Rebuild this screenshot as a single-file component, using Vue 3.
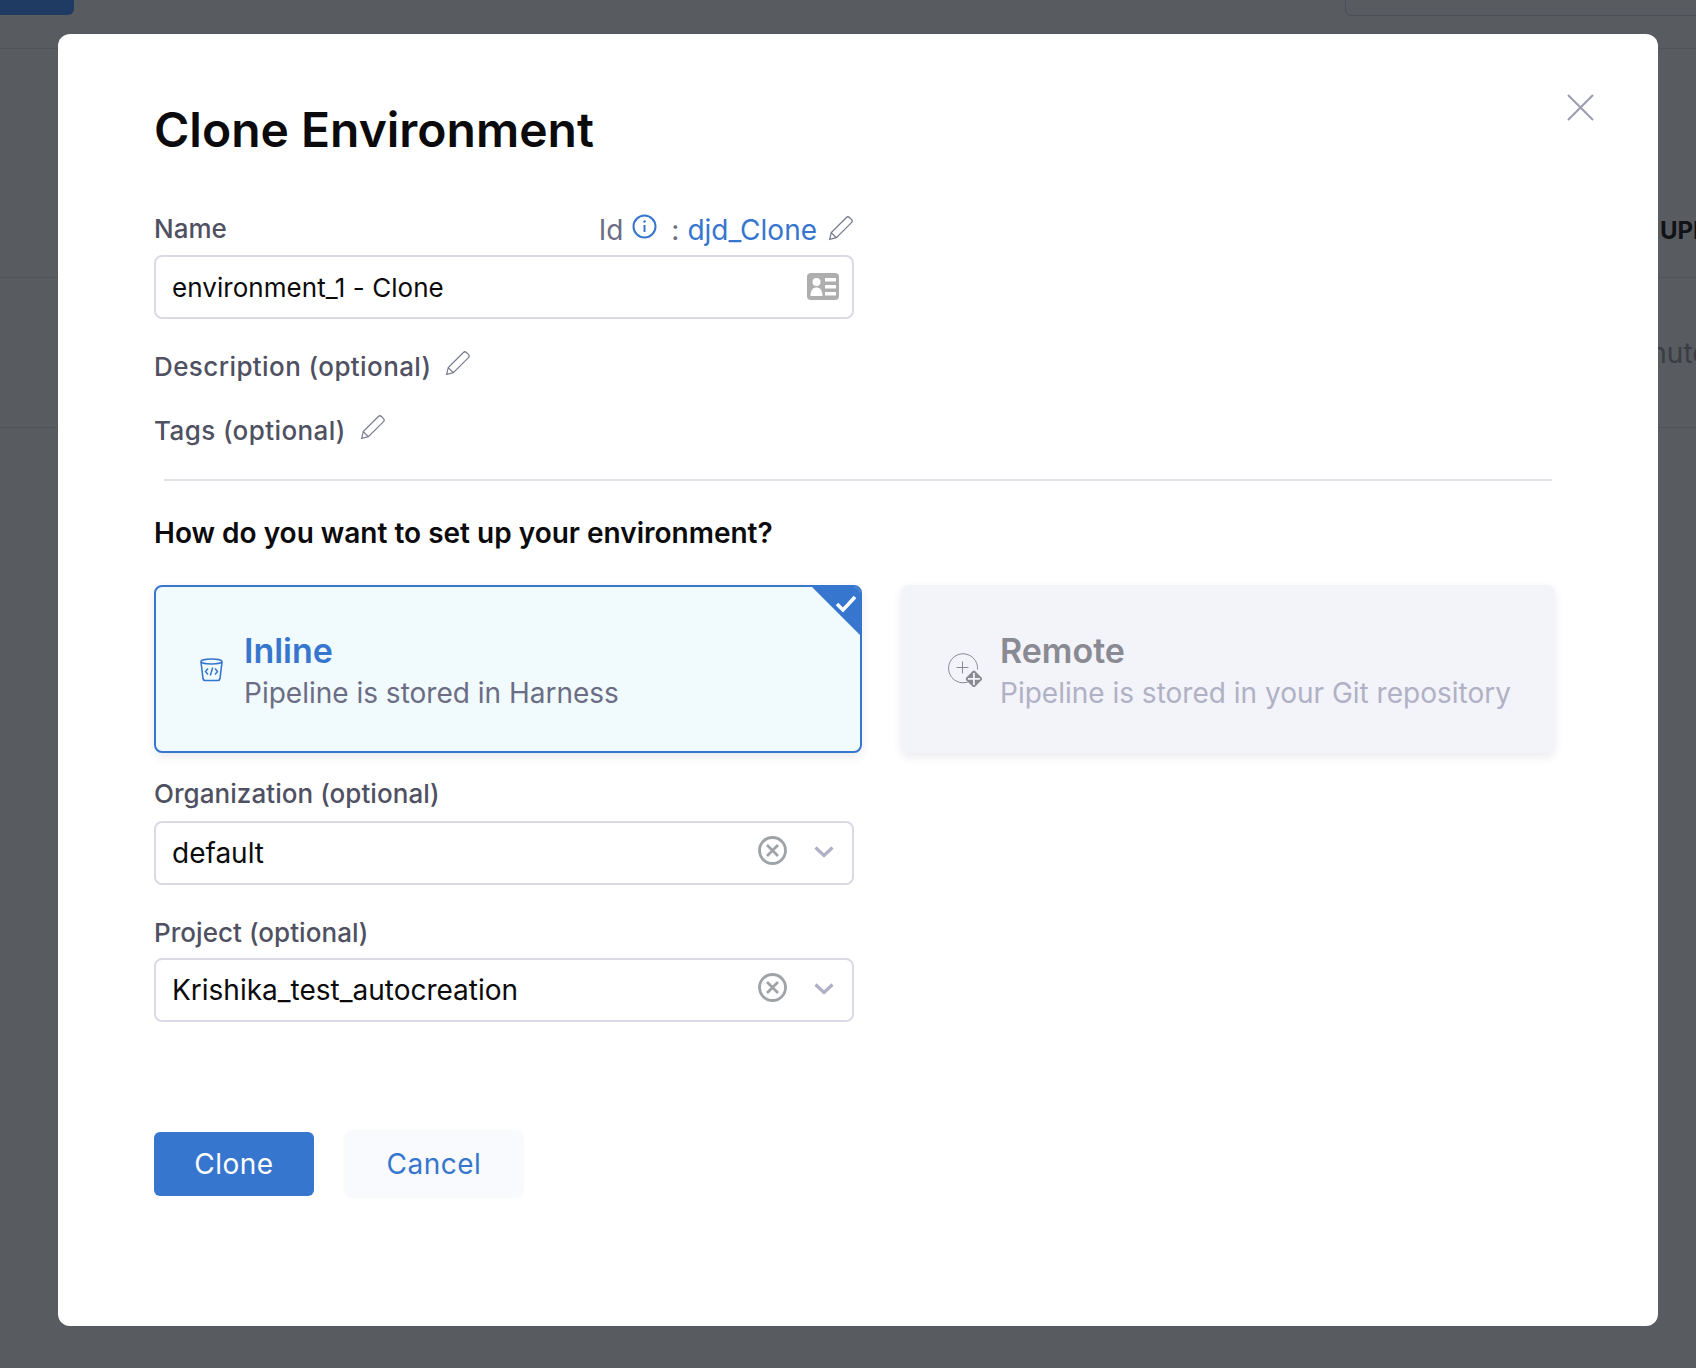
<script setup>
const cards = [
  { key: 'inline', title: 'Inline', text: 'Pipeline is stored in Harness', selected: true },
  { key: 'remote', title: 'Remote', text: 'Pipeline is stored in your Git repository', selected: false }
]
const selects = [
  { label: 'Organization (optional)', value: 'default' },
  { label: 'Project (optional)', value: 'Krishika_test_autocreation' }
]
const pencil = 'M1.500 22.500l1.500-6.200L17 2.300a2 2 0 0 1 2.800 0l1.900 1.900a2 2 0 0 1 0 2.800L7.700 21l-6.200 1.500zM3 16.300L7.700 21'
</script>

<template>
  <div class="page">
    <div class="behind">
      <div class="behind-btn"></div>
      <div class="behind-search"></div>
      <div class="behind-line line-a"></div>
      <div class="behind-line line-b"></div>
      <div class="behind-line line-c"></div>
      <span class="behind-head">UPDATED</span>
      <span class="behind-cell">minutes ago</span>
    </div>

    <div class="backdrop">
      <div class="modal">
        <button class="close" type="button" aria-label="Close">
          <svg width="27" height="27" viewBox="0 0 27 27" fill="none" stroke="#9b9bb0" stroke-width="2">
            <path d="M1 1l25 25M26 1L1 26" />
          </svg>
        </button>

        <h1 class="title">Clone Environment</h1>

        <div class="narrow">
          <div class="name-row">
            <label class="label">Name</label>
            <div class="id-row">
              <span class="id-text">Id</span>
              <svg class="info" width="25" height="25" viewBox="0 0 25 25" fill="none" stroke="#3676ce" stroke-width="2">
                <circle cx="12.5" cy="12.5" r="11" />
                <path d="M12.5 11v7" />
                <circle cx="12.5" cy="7.5" r="1.2" fill="#3676ce" stroke="none" />
              </svg>
              <span class="id-colon">:</span>
              <span class="id-value">djd_Clone</span>
              <svg class="id-pencil" width="26" height="26" viewBox="0 0 24 24" fill="none" stroke="#7a7c92" stroke-width="1.200">
                <path :d="pencil" />
              </svg>
            </div>
          </div>
          <div class="input name-input">
            <span>environment_1 - Clone</span>
            <svg width="32" height="28" viewBox="0 0 32 28">
              <rect width="32" height="27" rx="4" fill="#aeaeae" />
              <circle cx="9.5" cy="9" r="4" fill="#fff" />
              <path d="M3.5 23c0-6 2.5-8.500 6-8.500s6 2.500 6 8.500z" fill="#fff" />
              <path d="M18 5h11v3.500H18zM18 12h11v3.500H18zM18 19h11v3.500H18z" fill="#fff" />
            </svg>
          </div>
        </div>

        <div class="optional first">
          <label class="label spaced">Description (optional)</label>
          <svg width="26" height="26" viewBox="0 0 24 24" fill="none" stroke="#7a7c92" stroke-width="1.100">
            <path :d="pencil" />
          </svg>
        </div>
        <div class="optional second">
          <label class="label spaced">Tags (optional)</label>
          <svg width="26" height="26" viewBox="0 0 24 24" fill="none" stroke="#7a7c92" stroke-width="1.100">
            <path :d="pencil" />
          </svg>
        </div>

        <div class="divider"></div>

        <h2 class="question">How do you want to set up your environment?</h2>

        <div class="cards">
          <div v-for="card in cards" :key="card.key" class="card" :class="card.selected ? 'selected' : 'disabled'">
            <svg v-if="card.selected" class="card-icon" width="25" height="25" viewBox="0 0 25 25" fill="none" stroke="#3676ce" stroke-width="1.6">
              <ellipse cx="12.500" cy="4.500" rx="10.500" ry="2.500" />
              <path d="M2 5l2 16.500c.2 1.200 1 2 2.200 2h12.600c1.200 0 2-.8 2.200-2L23 5" />
              <path d="M9 11.500l-2.500 3 2.500 3M16 11.500l2.500 3-2.500 3M13.700 10.500l-2.400 8" stroke-width="1.500" />
            </svg>
            <svg v-else class="card-icon" width="37" height="37" viewBox="0 0 37 37" fill="none" stroke="#8a8a92" stroke-width="1">
              <path d="M22 29.500a14.500 14.500 0 1 1 8.500-12" />
              <path d="M15.500 9.500v12M9.500 15.500h12" />
              <path d="M28.300 19.200l6.200 6.200a2 2 0 0 1 0 2.800l-6.200 6.200a2 2 0 0 1-2.800 0l-6.200-6.200a2 2 0 0 1 0-2.800l6.200-6.200a2 2 0 0 1 2.800 0z" fill="#8a8a92" stroke="none" />
              <path d="M26.900 21v12M20.900 26.800h12" stroke="#f3f3fa" stroke-width="1.800" />
            </svg>
            <div class="card-text">
              <div class="card-title">{{ card.title }}</div>
              <div class="card-sub">{{ card.text }}</div>
            </div>
            <div v-if="card.selected" class="corner">
              <svg width="22" height="18" viewBox="0 0 22 18" fill="none" stroke="#fff" stroke-width="3.500">
                <path d="M2 9l6 6L20 2" />
              </svg>
            </div>
          </div>
        </div>

        <div v-for="sel in selects" :key="sel.label" class="narrow field">
          <label class="label">{{ sel.label }}</label>
          <div class="input select">
            <span>{{ sel.value }}</span>
            <svg class="clear" width="29" height="29" viewBox="0 0 29 29" fill="none" stroke="#9ea3a8" stroke-width="2.800">
              <circle cx="14.500" cy="14.500" r="13" />
              <path d="M9 9l11 11M20 9L9 20" />
            </svg>
            <svg class="chevron" width="20" height="13" viewBox="0 0 20 13" fill="none" stroke="#b0b1c4" stroke-width="3.200">
              <path d="M1.500 2.500L10 10.500l8.500-8" />
            </svg>
          </div>
        </div>

        <div class="actions">
          <button class="btn primary" type="button">Clone</button>
          <button class="btn secondary" type="button">Cancel</button>
        </div>
      </div>
    </div>
  </div>
</template>

<style>
html, body {
  margin: 0;
  background: #585c60;
}
</style>

<style scoped>
.page {
  position: relative;
  width: 1696px;
  height: 1368px;
  overflow: hidden;
  font-family: Inter, "Liberation Sans", sans-serif;
  background: #585c60;
}

.behind-btn {
  position: absolute;
  left: 0;
  top: 0;
  width: 74px;
  height: 15px;
  background: #1f3a63;
  border-radius: 0 0 6px 0;
}

.behind-search {
  position: absolute;
  left: 1345px;
  top: -10px;
  width: 400px;
  height: 24px;
  border: 1px solid #4c5056;
  border-radius: 6px;
}

.behind-line {
  position: absolute;
  left: 0;
  right: 0;
  height: 1px;
  background: #505458;
}

.line-a { top: 48px; }
.line-b { top: 277px; }
.line-c { top: 427px; }

.behind-head {
  position: absolute;
  left: 1660px;
  top: 216px;
  font-size: 24px;
  font-weight: 700;
  color: #101216;
  white-space: nowrap;
}

.behind-cell {
  position: absolute;
  left: 1619px;
  top: 336px;
  font-size: 28px;
  color: #3a3d44;
  white-space: nowrap;
}

.backdrop {
  position: absolute;
  inset: 0;
  padding: 34px 38px 42px 58px;
}

.modal {
  position: relative;
  height: 100%;
  box-sizing: border-box;
  background: #fff;
  border-radius: 12px;
  padding: 64px 96px 0;
}

.close {
  position: absolute;
  top: 60px;
  right: 64px;
  padding: 0;
  border: 0;
  background: none;
  display: flex;
}

.title {
  margin: 0;
  font-size: 48px;
  line-height: 64px;
  font-weight: 600;
  color: #0b0b0d;
}

.narrow {
  width: 700px;
}

.name-row {
  display: flex;
  justify-content: space-between;
  align-items: center;
  margin-top: 50px;
  height: 32px;
  margin-bottom: 11px;
}

.label {
  font-size: 26px;
  line-height: 32px;
  font-weight: 500;
  color: #4f5162;
}

.name-row .label {
  padding-top: 2px;
}

.spaced {
  letter-spacing: 0.4px;
}

.id-row {
  display: flex;
  align-items: center;
  padding-top: 4px;
  font-size: 28px;
  color: #6b6d85;
}

.info {
  margin: -7px 0 0 9px;
}

.id-colon {
  margin: 0 8px 0 14px;
}

.id-value {
  color: #3676ce;
}

.id-pencil {
  margin: -4px 0 0 11px;
}

.input {
  box-sizing: border-box;
  height: 64px;
  display: flex;
  align-items: center;
  justify-content: space-between;
  padding: 0 14px 0 16px;
  border: 2px solid #d9dae5;
  border-radius: 8px;
  font-size: 28px;
  color: #0b0b0d;
  background: #fff;
}

.name-input {
  font-size: 26px;
  padding-right: 13px;
  letter-spacing: 0.05px;
}

.optional {
  display: flex;
  align-items: center;
  gap: 14px;
  height: 32px;
  margin-top: 32px;
}

.optional svg {
  margin-top: -8px;
}

.divider {
  height: 2px;
  background: #e2e3ea;
  margin: 32px 0 0 10px;
  width: 1388px;
}

.question {
  margin: 35px 0 0;
  font-size: 28px;
  line-height: 34px;
  font-weight: 600;
  color: #0b0b0d;
}

.cards {
  display: grid;
  grid-template-columns: 708px 654px;
  gap: 39px;
  margin-top: 35px;
}

.card {
  position: relative;
  box-sizing: border-box;
  height: 168px;
  display: flex;
  align-items: center;
  border-radius: 8px;
  box-shadow: 0 4px 10px rgba(60, 60, 90, 0.1);
  overflow: hidden;
}

.selected {
  background: #f1fafd;
  border: 2px solid #3676ce;
  padding-left: 43px;
}

.disabled {
  background: #f3f3fa;
  padding-left: 46px;
}

.card-icon {
  flex: none;
}

.disabled .card-icon {
  margin-top: 3px;
}

.card-text {
  padding-top: 6px;
}

.selected .card-text {
  margin-left: 20px;
}

.disabled .card-text {
  margin-left: 16px;
}

.card-title {
  font-size: 34px;
  line-height: 42px;
  font-weight: 600;
  color: #3676ce;
}

.card-sub {
  font-size: 28px;
  line-height: 42px;
  color: #6b6d85;
}

.disabled .card-title {
  color: #8a8a92;
}

.disabled .card-sub {
  color: #b0b1c4;
}

.corner {
  position: absolute;
  top: -2px;
  right: -2px;
  width: 52px;
  height: 52px;
  background: #3676ce;
  clip-path: polygon(0 0, 100% 0, 100% 100%);
}

.corner svg {
  position: absolute;
  top: 10px;
  right: 5px;
}

.field {
  margin-top: 25px;
}

.field + .field {
  margin-top: 32px;
}

.field .label {
  display: block;
  margin-bottom: 11px;
  letter-spacing: 0.05px;
}

.field + .field .label {
  margin-bottom: 9px;
}

.select span {
  flex: 1;
}

.clear {
  margin: -5px 27px 0 0;
}

.chevron {
  margin: -3px 4px 0 0;
}

.actions {
  display: flex;
  gap: 32px;
  margin-top: 110px;
}

.btn {
  height: 64px;
  border: 0;
  border-radius: 6px;
  font-family: inherit;
  font-size: 28px;
  letter-spacing: 0.5px;
}

.primary {
  width: 160px;
  background: #3676ce;
  color: #fff;
}

.secondary {
  width: 176px;
  background: #f9fafd;
  color: #3676ce;
  box-shadow: 0 0 4px rgba(60, 60, 90, 0.08);
}
</style>
